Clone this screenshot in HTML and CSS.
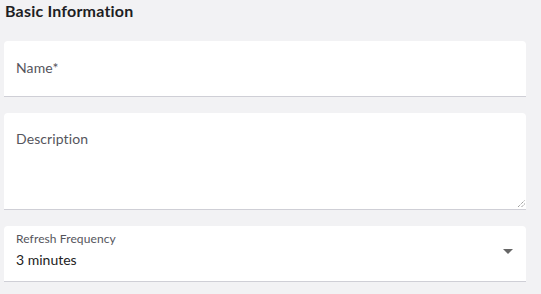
FILE: index.html
```html
<!DOCTYPE html>
<html>
<head>
<meta charset="utf-8">
<link rel="stylesheet" href="styles.css">
</head>
<body>
<div class="page">
  <h2 class="section-title">Basic Information</h2>
  <div class="field field-text">
    <span class="placeholder">Name*</span>
  </div>
  <div class="field field-area">
    <span class="placeholder">Description</span>
    <svg class="resize" width="8" height="8" viewBox="0 0 8 8"><path d="M1 8 L8 1 M4.5 8 L8 4.5" stroke="#777" stroke-width="1" stroke-dasharray="1 1" fill="none"/></svg>
  </div>
  <div class="field field-select">
    <div class="select-text">
      <span class="select-label">Refresh Frequency</span>
      <span class="select-value">3 minutes</span>
    </div>
    <svg class="arrow" width="10" height="5" viewBox="0 0 10 5"><path d="M0 0 L10 0 L5 5 Z" fill="#666"/></svg>
  </div>
</div>
</body>
</html>
```

FILE: styles.css
```css
html, body {
  margin: 0;
  padding: 0;
  background: #f2f2f4;
}
body {
  font-family: "Lato", "Noto Sans", sans-serif;
  color: #222;
}
.page {
  width: 522px;
  padding: 0 0 0 4px;
  display: flex;
  flex-direction: column;
}
.section-title {
  margin: 1px 0 0 1px;
  font-size: 16px;
  font-weight: 700;
  letter-spacing: 0.2px;
  line-height: 20px;
  color: #1e1e24;
}
.field {
  background: #fff;
  border-radius: 4px 4px 0 0;
  border-bottom: 1px solid #cfcfd6;
  position: relative;
  box-sizing: border-box;
}
.field-text {
  margin-top: 20px;
  height: 56px;
  padding: 16px 12px 0;
}
.placeholder {
  font-size: 14px;
  letter-spacing: 0.1px;
  color: #55555c;
  line-height: 18px;
}
.field-area {
  margin-top: 16px;
  height: 97px;
  padding: 15px 12px 0;
}
.resize {
  position: absolute;
  right: 1px;
  bottom: 2px;
}
.field-select {
  margin-top: 16px;
  height: 56px;
  padding: 6px 13px 0 12px;
  display: flex;
  justify-content: space-between;
  align-items: center;
}
.select-text {
  display: flex;
  flex-direction: column;
  align-self: flex-start;
}
.select-label {
  font-size: 12px;
  letter-spacing: 0.1px;
  line-height: 14px;
  color: #55555c;
}
.select-value {
  margin-top: 5px;
  font-size: 14px;
  line-height: 18px;
  color: #222;
}
.arrow {
  margin-top: -10px;
}
```
